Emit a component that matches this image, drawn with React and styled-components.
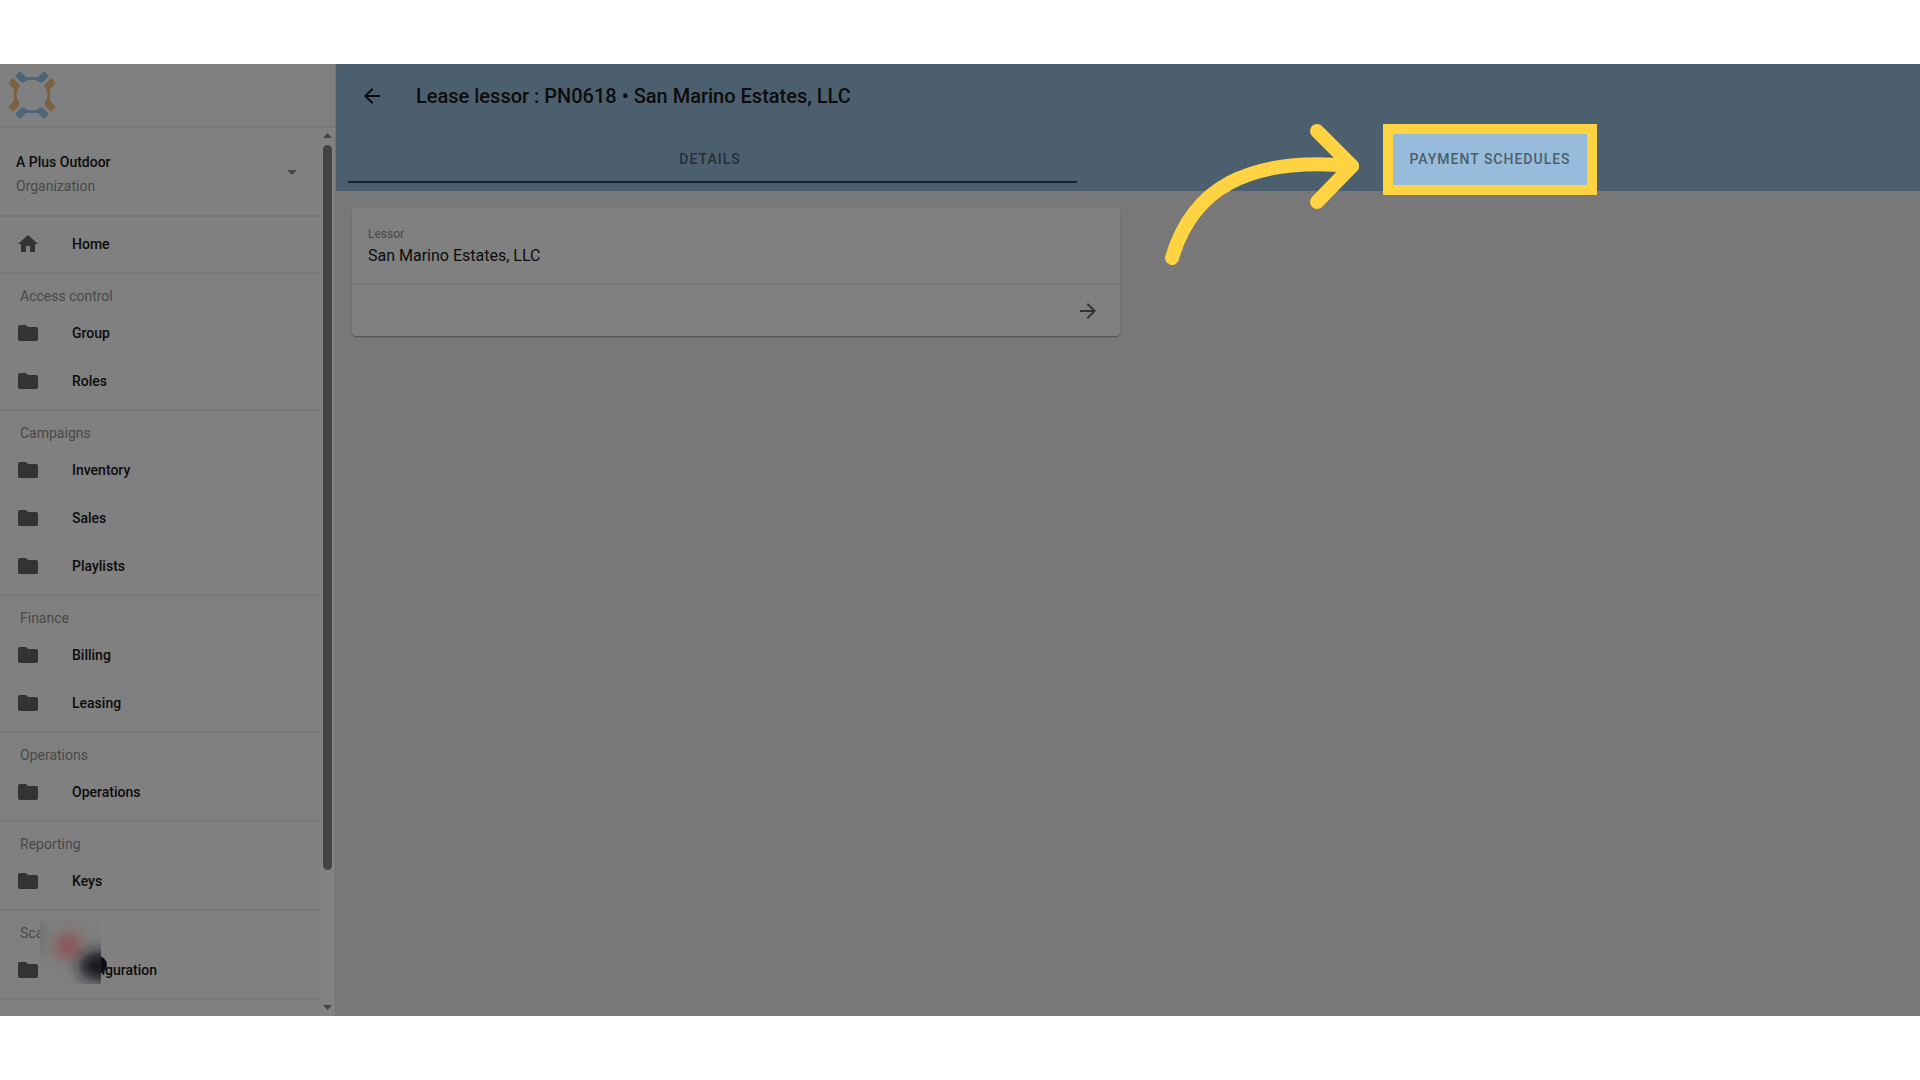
import React from "react";
import styled, { createGlobalStyle } from "styled-components";
import { MdArrowBack, MdArrowForward, MdArrowDropDown, MdFolder, MdHome } from "react-icons/md";

const GlobalStyle = createGlobalStyle`
  * {
    box-sizing: border-box;
  }
  body {
    margin: 0;
    background-color: #ffffff;
    font-family: Roboto, sans-serif;
    font-size: 14px;
    line-height: 20px;
    color: #0c0c0c;
  }
  button {
    font: inherit;
    color: inherit;
    background: none;
    border: 0;
    padding: 0;
    cursor: pointer;
  }
`;

const Page = styled.div`
  min-height: 100vh;
  padding: 64px 0;
`;
const Shell = styled.div`
  display: flex;
  position: relative;
  height: calc(100vh - 128px);
  min-height: 480px;
  overflow: hidden;
  background-color: #787878;
`;

const Sidebar = styled.aside`
  display: flex;
  flex-direction: column;
  flex: 0 0 336px;
  background-color: #808080;
  border-right: 1px solid #747474;
`;
const Brand = styled.div`
  height: 64px;
  flex-shrink: 0;
  padding: 7px 8px;
  border-bottom: 2px solid #787878;
`;
const SideBody = styled.div`
  display: flex;
  flex: 1;
  min-height: 0;
`;
const SideContent = styled.div`
  flex: 1;
  overflow: hidden;
`;
const OrgButton = styled.button`
  display: flex;
  align-items: center;
  justify-content: space-between;
  width: 100%;
  height: 89px;
  padding: 0 16px;
  text-align: left;
  border-bottom: 2px solid #787878;
`;
const OrgText = styled.span`
  padding-top: 4px;
`;
const OrgName = styled.span`
  display: block;
  line-height: 24px;
  font-weight: 500;
`;
const OrgKind = styled.span`
  display: block;
  line-height: 24px;
  color: #484848;
`;
const Group = styled.section`
  padding: 0 0 4px;
  border-bottom: 2px solid #787878;
`;
const GroupTitle = styled.h2`
  margin: 0;
  padding: 12px 20px 3px;
  font-size: 14px;
  font-weight: 400;
  color: #484848;
`;
const HomeGroup = styled(Group)`
  padding: 3px 0 4px;
`;
const NavItem = styled.a`
  display: flex;
  align-items: center;
  gap: 32px;
  height: 48px;
  padding: 0 16px;
  font-weight: 500;
  color: #0c0c0c;
  text-decoration: none;
  svg {
    color: #333333;
  }
`;
const ScrollBar = styled.div`
  display: flex;
  flex-direction: column;
  align-items: center;
  flex: 0 0 15px;
  padding: 5px 0 6px;
  background-color: #828282;
`;
const ScrollTrack = styled.div`
  flex: 1;
  width: 9px;
  margin: 7px 0;
`;
const ScrollThumb = styled.div`
  height: 85%;
  border-radius: 5px;
  background-color: #444444;
`;

const Main = styled.main`
  flex: 1;
  min-width: 0;
`;
const TopBar = styled.header`
  height: 127px;
  background-color: #4c5f6e;
`;
const TitleRow = styled.div`
  display: flex;
  align-items: center;
  gap: 32px;
  height: 63px;
  padding: 0 24px;
`;
const IconButton = styled.button`
  display: flex;
`;
const Title = styled.h1`
  margin: 0;
  font-size: 20px;
  line-height: 32px;
  font-weight: 500;
`;
const Tabs = styled.div`
  display: grid;
  grid-template-columns: 1fr 1fr;
  gap: 32px;
  height: 64px;
  padding-right: 56px;
`;
const Tab = styled.button`
  position: relative;
  font-weight: 500;
  letter-spacing: 1px;
  text-transform: uppercase;
  color: #262f37;
  &::after {
    content: "";
    position: absolute;
    left: 12px;
    right: 7px;
    bottom: 8px;
    height: 2px;
    background-color: #1c2226;
  }
`;
const MarkedTab = styled.button`
  align-self: center;
  justify-self: center;
  z-index: 1;
  height: 71px;
  margin: -4px 0;
  padding: 0 16px;
  border: 10px solid #ffd342;
  background-color: #97bcdb;
  font-weight: 500;
  letter-spacing: 1px;
  text-transform: uppercase;
  color: #4b5e6d;
`;
const Content = styled.div`
  display: grid;
  grid-template-columns: 1fr 1fr;
  gap: 16px;
  padding: 17px 16px;
`;
const Card = styled.article`
  border-radius: 4px;
  background-color: #808080;
  box-shadow: 0 2px 1px -1px rgba(0, 0, 0, 0.2), 0 1px 2px rgba(0, 0, 0, 0.2);
`;
const Field = styled.dl`
  height: 77px;
  margin: 0;
  padding: 16px;
  border-bottom: 2px solid #787878;
`;
const FieldLabel = styled.dt`
  font-size: 12px;
  color: #484848;
`;
const FieldValue = styled.dd`
  margin: 0;
  font-size: 16px;
  line-height: 24px;
`;
const CardActions = styled.div`
  display: flex;
  align-items: center;
  justify-content: flex-end;
  height: 51px;
  padding: 0 20px;
  color: #333333;
`;

const Pointer = styled.svg`
  position: absolute;
  top: 56px;
  right: 556px;
  width: 204px;
  height: 150px;
`;
const Avatar = styled.svg`
  position: absolute;
  left: 38px;
  bottom: 30px;
  width: 72px;
  height: 68px;
`;

const groups = [
  { title: "Access control", items: ["Group", "Roles"] },
  { title: "Campaigns", items: ["Inventory", "Sales", "Playlists"] },
  { title: "Finance", items: ["Billing", "Leasing"] },
  { title: "Operations", items: ["Operations"] },
  { title: "Reporting", items: ["Keys"] },
  { title: "Scala", items: ["Configuration"] }
];

const Logo = () => (
  <svg width="48" height="48" viewBox="0 0 48 48" aria-label="Logo">
    {[0, 180].map(angle => (
      <g key={angle} transform={`rotate(${angle} 24 24)`}>
        <path
          fill="#4d6579"
          d="M8 4 L11 1 Q12 0 13 1 L18 6 H30 L35 1 Q36 0 37 1 L40 4 Q41 5 40 6 L35 11 Q34 12 32 11 A15 15 0 0 0 16 11 Q14 12 13 11 L8 6 Q7 5 8 4 Z"
        />
        <path
          fill="#7c6042"
          d="M4 8 L1 11 Q0 12 1 13 L6 18 V30 L1 35 Q0 36 1 37 L4 40 Q5 41 6 40 L11 35 Q12 34 11 32 A15 15 0 0 1 11 16 Q12 14 11 13 L6 8 Q5 7 4 8 Z"
        />
      </g>
    ))}
  </svg>
);

export default () => {
  return (
    <Page>
      <GlobalStyle />
      <Shell>
        <Sidebar>
          <Brand>
            <Logo />
          </Brand>
          <SideBody>
            <SideContent>
              <OrgButton>
                <OrgText>
                  <OrgName>A Plus Outdoor</OrgName>
                  <OrgKind>Organization</OrgKind>
                </OrgText>
                <MdArrowDropDown size={24} color="#484848" />
              </OrgButton>
              <HomeGroup>
                <NavItem href="#home">
                  <MdHome size={24} />
                  Home
                </NavItem>
              </HomeGroup>
              {groups.map(({ title, items }) => (
                <Group key={title}>
                  <GroupTitle>{title}</GroupTitle>
                  {items.map(item => (
                    <NavItem key={item} href={`#${item.toLowerCase()}`}>
                      <MdFolder size={24} />
                      {item}
                    </NavItem>
                  ))}
                </Group>
              ))}
            </SideContent>
            <ScrollBar>
              <svg width="9" height="5" viewBox="0 0 9 5">
                <path d="M0 5 L4.500 0 L9 5 Z" fill="#444444" />
              </svg>
              <ScrollTrack>
                <ScrollThumb />
              </ScrollTrack>
              <svg width="9" height="5" viewBox="0 0 9 5">
                <path d="M0 0 L4.500 5 L9 0 Z" fill="#444444" />
              </svg>
            </ScrollBar>
          </SideBody>
        </Sidebar>
        <Main>
          <TopBar>
            <TitleRow>
              <IconButton aria-label="Back">
                <MdArrowBack size={24} />
              </IconButton>
              <Title>Lease lessor : PN0618 • San Marino Estates, LLC</Title>
            </TitleRow>
            <Tabs>
              <Tab>Details</Tab>
              <MarkedTab>Payment schedules</MarkedTab>
            </Tabs>
          </TopBar>
          <Content>
            <Card>
              <Field>
                <FieldLabel>Lessor</FieldLabel>
                <FieldValue>San Marino Estates, LLC</FieldValue>
              </Field>
              <CardActions>
                <IconButton aria-label="Open lessor">
                  <MdArrowForward size={24} />
                </IconButton>
              </CardActions>
            </Card>
          </Content>
        </Main>
        <Pointer viewBox="0 0 204 150" fill="none" stroke="#ffd342" strokeWidth="14" strokeLinecap="round" strokeLinejoin="round">
          <path d="M12 138 C32 70 86 36 192 46" />
          <path d="M157 11 L192 46 L157 82" />
        </Pointer>
        <Avatar viewBox="0 0 72 68">
          <defs>
            <filter id="soft" x="-80%" y="-80%" width="260%" height="260%">
              <feGaussianBlur stdDeviation="7" />
            </filter>
            <clipPath id="patch">
              <rect x="2" y="3" width="61" height="63" />
            </clipPath>
          </defs>
          <path d="M14 6 Q30 -2 46 6" fill="none" stroke="#7a7a7a" strokeWidth="2" />
          <circle cx="60" cy="47" r="9" fill="#0b0e18" />
          <g clipPath="url(#patch)">
            <rect x="2" y="3" width="61" height="63" fill="#7f7f7f" />
            <rect x="-8" y="0" width="12" height="34" fill="#686868" filter="url(#soft)" />
            <circle cx="30" cy="28" r="13" fill="#8a5258" filter="url(#soft)" />
            <ellipse cx="61" cy="48" rx="20" ry="15" fill="#14171f" filter="url(#soft)" />
          </g>
        </Avatar>
      </Shell>
    </Page>
  );
};
